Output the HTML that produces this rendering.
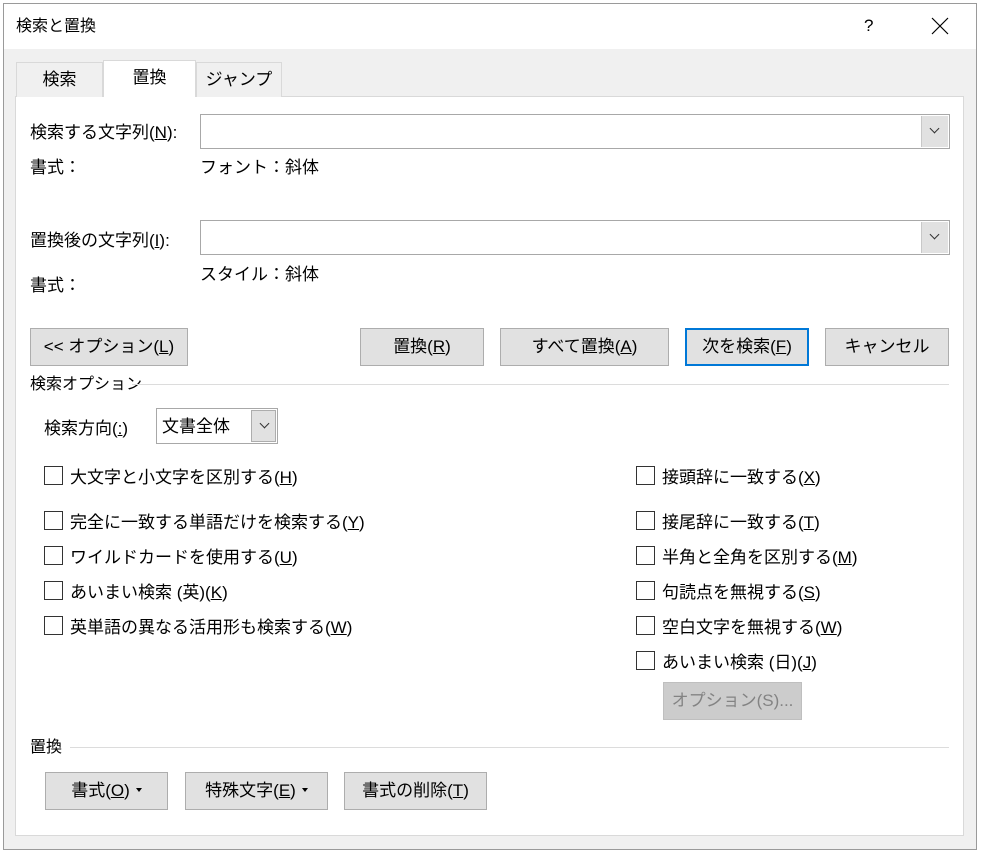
<!DOCTYPE html>
<html><head><meta charset="utf-8"><style>
*{margin:0;padding:0;box-sizing:border-box}
body{width:981px;height:853px;background:#fff;font-family:"Liberation Sans","Noto Sans CJK JP",sans-serif;font-size:17px;color:#000;position:relative;overflow:hidden}
.a{position:absolute;white-space:nowrap;line-height:24px}
.dlg{position:absolute;left:3px;top:3px;width:974px;height:847px;border:1px solid #9a9a9a;background:#f0f0f0}
.title{position:absolute;left:0;top:0;width:100%;height:45px;background:#fff}
.panel{position:absolute;left:15px;top:96px;width:949px;height:740px;background:#fff;border:1px solid #d9d9d9}
.tab{position:absolute;top:62px;height:35px;border:1px solid #d9d9d9;border-bottom:none;background:#f0f0f0;text-align:center;line-height:34px;font-size:17px}
.btn{position:absolute;height:38px;background:#e1e1e1;border:1px solid #adadad;text-align:center;line-height:36px}
.inp{position:absolute;left:200px;width:750px;height:35px;border:1px solid #a8a8a8;background:#fff}
.dd{position:absolute;right:1px;top:1px;width:27px;height:31px;background:#e1e1e1;border-left:1px solid #c8c8c8}
.dd:after{content:"";position:absolute;left:9px;top:9px;width:6px;height:6px;border-right:1px solid #333;border-bottom:1px solid #333;transform:rotate(45deg)}
.cb{position:absolute;width:19px;height:19px;border:1px solid #333;background:#fff}
.line{position:absolute;height:1px;background:#dcdcdc}
u{text-decoration:underline}
.tri{display:inline-block;width:0;height:0;border-left:3.5px solid transparent;border-right:3.5px solid transparent;border-top:4px solid #000;vertical-align:middle;margin-left:6px;position:relative;top:-2px}
</style></head><body>
<div class="dlg"><div class="title"></div></div>
<div class="a" style="left:16px;top:15px;font-size:16px">検索と置換</div>
<div class="a" style="left:864px;top:14px;font-size:17px">?</div>
<svg style="position:absolute;left:931px;top:17px" width="18" height="18"><path d="M1 1L17 17M17 1L1 17" stroke="#000" stroke-width="1.2"/></svg>
<div class="panel"></div>
<div class="tab" style="left:16px;width:87px">検索</div>
<div class="tab" style="left:103px;width:93px;top:60px;height:37px;background:#fff;border-color:#d9d9d9">置換</div>
<div class="tab" style="left:196px;width:86px">ジャンプ</div>

<div class="a" style="left:30px;top:121px">検索する文字列(<u>N</u>):</div>
<div class="inp" style="top:114px"><div class="dd"></div></div>
<div class="a" style="left:30px;top:156px">書式：</div>
<div class="a" style="left:200px;top:156px">フォント：斜体</div>

<div class="a" style="left:30px;top:229px">置換後の文字列(<u>I</u>):</div>
<div class="inp" style="top:220px"><div class="dd"></div></div>
<div class="a" style="left:30px;top:274px">書式：</div>
<div class="a" style="left:200px;top:263px">スタイル：斜体</div>

<div class="btn" style="left:30px;top:328px;width:158px">&lt;&lt; オプション(<u>L</u>)</div>
<div class="btn" style="left:360px;top:328px;width:124px">置換(<u>R</u>)</div>
<div class="btn" style="left:500px;top:328px;width:169px">すべて置換(<u>A</u>)</div>
<div class="btn" style="left:685px;top:328px;width:124px;border:2px solid #0078d7;line-height:34px">次を検索(<u>F</u>)</div>
<div class="btn" style="left:825px;top:328px;width:124px">キャンセル</div>

<div class="a" style="left:30px;top:373px;font-size:16px">検索オプション</div>
<div class="line" style="left:132px;top:384px;width:817px"></div>

<div class="a" style="left:44px;top:417px">検索方向(<u>:</u>)</div>
<div class="a" style="left:156px;top:408px;width:122px;height:36px;border:1px solid #a8a8a8;background:#fff"><span class="a" style="left:5px;top:6px">文書全体</span><div class="dd" style="width:25px;height:32px;border:1px solid #adadad;right:1px"></div></div>

<div class="cb" style="left:44px;top:466px"></div><div class="a" style="left:70px;top:466px">大文字と小文字を区別する(<u>H</u>)</div>
<div class="cb" style="left:44px;top:511px"></div><div class="a" style="left:70px;top:511px">完全に一致する単語だけを検索する(<u>Y</u>)</div>
<div class="cb" style="left:44px;top:546px"></div><div class="a" style="left:70px;top:546px">ワイルドカードを使用する(<u>U</u>)</div>
<div class="cb" style="left:44px;top:581px"></div><div class="a" style="left:70px;top:581px">あいまい検索 (英)(<u>K</u>)</div>
<div class="cb" style="left:44px;top:616px"></div><div class="a" style="left:70px;top:616px">英単語の異なる活用形も検索する(<u>W</u>)</div>

<div class="cb" style="left:636px;top:466px"></div><div class="a" style="left:662px;top:466px">接頭辞に一致する(<u>X</u>)</div>
<div class="cb" style="left:636px;top:511px"></div><div class="a" style="left:662px;top:511px">接尾辞に一致する(<u>T</u>)</div>
<div class="cb" style="left:636px;top:546px"></div><div class="a" style="left:662px;top:546px">半角と全角を区別する(<u>M</u>)</div>
<div class="cb" style="left:636px;top:581px"></div><div class="a" style="left:662px;top:581px">句読点を無視する(<u>S</u>)</div>
<div class="cb" style="left:636px;top:616px"></div><div class="a" style="left:662px;top:616px">空白文字を無視する(<u>W</u>)</div>
<div class="cb" style="left:636px;top:651px"></div><div class="a" style="left:662px;top:651px">あいまい検索 (日)(<u>J</u>)</div>
<div class="btn" style="left:663px;top:682px;width:139px;background:#ccc;border-color:#bfbfbf;color:#838383">オプション(S)...</div>

<div class="a" style="left:30px;top:736px;font-size:16px">置換</div>
<div class="line" style="left:70px;top:747px;width:879px"></div>
<div class="btn" style="left:45px;top:772px;width:123px">書式(<u>O</u>)<span class="tri"></span></div>
<div class="btn" style="left:185px;top:772px;width:143px">特殊文字(<u>E</u>)<span class="tri"></span></div>
<div class="btn" style="left:344px;top:772px;width:143px">書式の削除(<u>T</u>)</div>
</body></html>
